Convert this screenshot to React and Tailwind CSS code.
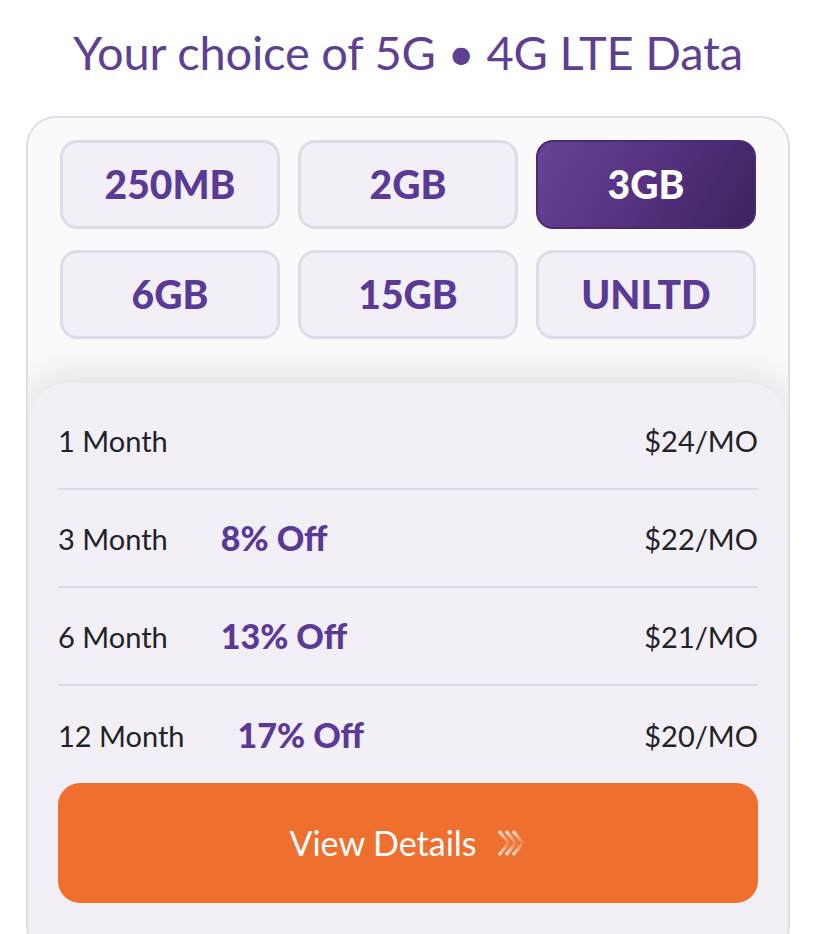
import React from "react";

const plans = ["250MB", "2GB", "3GB", "6GB", "15GB", "UNLTD"];
const rows = [
  { label: "1 Month", off: null, price: "$24/MO" },
  { label: "3 Month", off: "8% Off", price: "$22/MO" },
  { label: "6 Month", off: "13% Off", price: "$21/MO" },
  { label: "12 Month", off: "17% Off", price: "$20/MO" },
];

function Chevrons() {
  return (
    <svg width="30" height="28" viewBox="0 0 30 28" fill="none">
      <defs>
        <linearGradient id="cg" x1="0" y1="0" x2="1" y2="0">
          <stop offset="0" stopColor="#ffffff" stopOpacity="0.8" />
          <stop offset="1" stopColor="#ffffff" stopOpacity="0.1" />
        </linearGradient>
      </defs>
      <path d="M2 2 L12 14 L2 26" stroke="url(#cg)" strokeWidth="3.4" />
      <path d="M9 2 L19 14 L9 26" stroke="url(#cg)" strokeWidth="3.4" />
      <path d="M16 2 L26 14 L16 26" stroke="url(#cg)" strokeWidth="3.4" />
    </svg>
  );
}

export default function App() {
  return (
    <div className="w-[816px] h-[934px] bg-white overflow-hidden" style={{ fontFamily: "Lato, 'Open Sans', sans-serif" }}>
      <h1 className="text-center text-[47px] leading-none text-[#5f3f92] pt-[29px] h-[116px] tracking-[-0.2px]">
        Your choice of 5G • 4G LTE Data
      </h1>
      <div className="mx-[26px] h-[840px] rounded-[30px] border-2 border-[#e2dbee] bg-[#fafafa] overflow-hidden flex flex-col">
        <div className="grid grid-cols-3 gap-x-[18px] gap-y-[21px] px-[32px] pt-[22px] pb-[44px]">
          {plans.map((p) => {
            const sel = p === "3GB";
            return (
              <div
                key={p}
                className={
                  sel
                    ? "h-[89px] rounded-[17px] flex items-center justify-center text-white font-black text-[39px] bg-[linear-gradient(120deg,#6a4297_0%,#55317f_50%,#3e225f_100%)] border-2 border-[#4a2a74]"
                    : "h-[89px] rounded-[17px] flex items-center justify-center text-[#5b3996] font-black text-[39px] bg-[#f2eff7] border-[3px] border-[#e1daed]"
                }
              >
                {p}
              </div>
            );
          })}
        </div>
        <div className="flex-1 bg-[#f2eff7] rounded-t-[40px] shadow-[0_-12px_28px_rgba(40,20,80,0.10)] px-[30px] pt-[9px]">
          {rows.map((r, i) => (
            <div
              key={r.label}
              className={
                "h-[98px] flex items-center text-[29px] text-[#222326] " +
                (i < rows.length - 1 ? "border-b-2 border-[#ddd7e8]" : "")
              }
            >
              <span className="leading-none">{r.label}</span>
              {r.off && (
                <span className="ml-[53px] font-black text-[34px] text-[#5b3996] leading-none">{r.off}</span>
              )}
              <span className="ml-auto leading-none">{r.price}</span>
            </div>
          ))}
          <button className="mt-[-1px] w-full h-[120px] rounded-[22px] bg-[#ee6f2e] flex items-center justify-center gap-[20px] text-white text-[34px]">
            <span className="leading-none">View Details</span>
            <Chevrons />
          </button>
        </div>
      </div>
    </div>
  );
}
